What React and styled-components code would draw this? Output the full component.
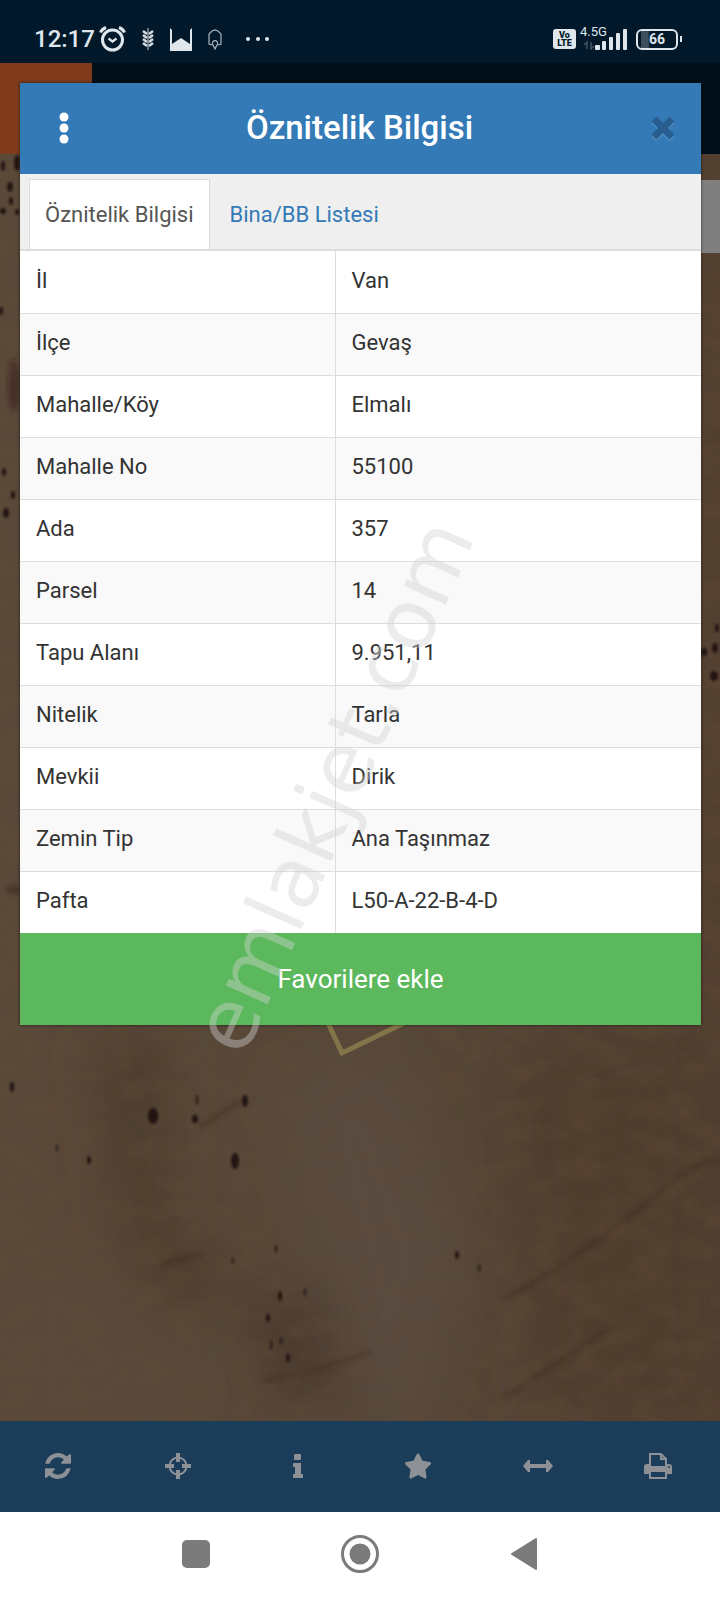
import React, { useState } from "react";
import styled, { createGlobalStyle } from "styled-components";
import { FaStar } from "react-icons/fa";

const attributes = [
  { label: "İl", value: "Van" },
  { label: "İlçe", value: "Gevaş" },
  { label: "Mahalle/Köy", value: "Elmalı" },
  { label: "Mahalle No", value: "55100" },
  { label: "Ada", value: "357" },
  { label: "Parsel", value: "14" },
  { label: "Tapu Alanı", value: "9.951,11" },
  { label: "Nitelik", value: "Tarla" },
  { label: "Mevkii", value: "Dirik" },
  { label: "Zemin Tip", value: "Ana Taşınmaz" },
  { label: "Pafta", value: "L50-A-22-B-4-D" },
];

const tabs = ["Öznitelik Bilgisi", "Bina/BB Listesi"];

// x, y, rx, ry of the shrubs on the satellite image
const shrubs = [
  [153, 1116, 5, 8], [197, 1100, 1, 5], [195, 1119, 3, 4], [245, 1101, 3, 6],
  [235, 1161, 4, 8], [12, 1087, 2, 5], [89, 1160, 2, 4], [57, 1148, 1, 3],
  [280, 1296, 2, 5], [268, 1318, 2, 4], [281, 1341, 1, 4], [271, 1345, 1, 5],
  [305, 1292, 1, 4], [288, 1358, 2, 4], [457, 1255, 2, 4], [479, 1268, 1, 4],
  [276, 1249, 1, 4], [233, 1261, 1, 3], [3, 166, 2, 5], [17, 163, 3, 8],
  [10, 187, 3, 5], [11, 201, 2, 4], [17, 212, 2, 3], [3, 211, 3, 3],
  [1, 311, 2, 4], [4, 472, 2, 4], [13, 495, 2, 4], [6, 513, 3, 5],
  [717, 628, 2, 4], [715, 648, 3, 5], [704, 652, 3, 4], [714, 676, 4, 5],
];

const Terrain = () => (
  <TerrainSvg viewBox="0 0 720 1600" preserveAspectRatio="xMidYMin slice" aria-hidden="true">
    <defs>
      <linearGradient id="soil" x1="0" y1="0" x2="1" y2="0">
        <stop offset="0" stopColor="#5a4939" />
        <stop offset="0.55" stopColor="#564738" />
        <stop offset="1" stopColor="#523f30" />
      </linearGradient>
      <filter id="grain" x="0" y="0" width="100%" height="100%">
        <feTurbulence type="fractalNoise" baseFrequency="0.03 0.05" numOctaves="5" seed="8" />
        <feColorMatrix values="0 0 0 0 0.12  0 0 0 0 0.07  0 0 0 0 0.04  1.8 0 0 0 -0.65" />
      </filter>
      <filter id="soft" x="-30%" y="-30%" width="160%" height="160%">
        <feGaussianBlur stdDeviation="26" />
      </filter>
      <filter id="edge">
        <feGaussianBlur stdDeviation="1" />
      </filter>
      <filter id="crease">
        <feGaussianBlur stdDeviation="2" />
      </filter>
    </defs>
    <rect width="720" height="1600" fill="url(#soil)" />
    <g filter="url(#soft)">
      <path d="M90 1040 L170 1030 L170 1230 L240 1260 L180 1330 L120 1240 Z" fill="#4e3c2e" />
      <path d="M280 1080 L390 1060 L460 1250 L420 1420 L360 1410 Z" fill="#5a4c40" />
      <path d="M500 1060 L720 1000 L720 1420 L540 1420 Z" fill="#503d2f" />
      <path d="M240 1290 L320 1290 L360 1400 L270 1400 Z" fill="#4c3a2d" />
      <path d="M0 1300 L110 1280 L210 1420 L0 1420 Z" fill="#5a4a3b" />
    </g>
    <g fill="#301c18" fillOpacity="0.5" filter="url(#crease)">
      <ellipse cx="14" cy="385" rx="6" ry="26" />
      <ellipse cx="14" cy="890" rx="8" ry="4" />
    </g>
    <g stroke="#35261b" strokeOpacity="0.4" strokeWidth="4" fill="none" filter="url(#crease)">
      <path d="M504 1398 Q560 1360 612 1328" />
      <path d="M504 1300 Q590 1250 650 1200 T720 1165" />
      <path d="M200 1127 L240 1101" />
      <path d="M160 1264 L200 1255" />
      <path d="M262 1380 Q310 1375 370 1352" />
    </g>
    <rect width="720" height="1600" filter="url(#grain)" opacity="0.5" />
    <g fill="#1c100a" fillOpacity="0.9" filter="url(#edge)">
      {shrubs.map(([x, y, rx, ry]) => (
        <ellipse key={`${x}-${y}`} cx={x} cy={y} rx={rx} ry={ry} />
      ))}
    </g>
    <path d="M322 1010 L342 1053 L404 1023" fill="none" stroke="#83744a" strokeWidth="5" />
  </TerrainSvg>
);

const AlarmIcon = () => (
  <svg width="27" height="26" viewBox="0 0 27 26" fill="none" stroke="#dfe6ec" strokeWidth="3">
    <circle cx="13.500" cy="14" r="10" />
    <path d="M1.500 6.500 Q3 3 7 1.500 M25.500 6.500 Q24 3 20 1.500" />
    <path d="M9.500 12.500 L13.500 15.500 L17.500 12.500" strokeWidth="2.200" />
  </svg>
);

const WheatIcon = () => (
  <svg width="12" height="24" viewBox="0 0 12 24" fill="none" stroke="#d3dae0" strokeWidth="2.500">
    <path d="M6 1 V23" strokeWidth="1" />
    <path d="M1 4 L5 7 M1 8 L5 11 M1 12 L5 15 M1 16 L5 19" />
    <path d="M11 4 L7 7 M11 8 L7 11 M11 12 L7 15 M11 16 L7 19" />
  </svg>
);

const PictureIcon = () => (
  <svg width="22" height="24" viewBox="0 0 22 24">
    <path d="M0 1 L2 3 V17 L11 11 L20 17 V3 L22 1 V24 H0 Z" fill="#dfe6ec" />
  </svg>
);

const ParcelIcon = () => (
  <svg width="14" height="21" viewBox="0 0 14 21" fill="none" stroke="#aab6bf" strokeWidth="1.200">
    <path d="M4 16 L1 15 V5 L4 2 L7 1 L10 2 L13 5 V15 L10 16" />
    <path d="M7 20 L4.500 15 A2.600 2.600 0 1 1 9.500 15 Z" />
  </svg>
);

const DotsIcon = () => (
  <svg width="32" height="6" viewBox="0 0 32 6" fill="#dfe6ec">
    <circle cx="10" cy="3" r="2" />
    <circle cx="20" cy="3" r="2" />
    <circle cx="29" cy="3" r="2" />
  </svg>
);

const SignalIcon = () => (
  <svg width="44" height="22" viewBox="0 0 44 22" fill="#dfe6ec">
    <path d="M4 21 V14 L1 17 M8 14 V21 L11 18" fill="none" stroke="#46545f" strokeWidth="1.500" />
    <rect x="12" y="17" width="5" height="5" rx="1" />
    <rect x="19" y="13" width="4" height="9" rx="1" />
    <rect x="26" y="9" width="4" height="13" rx="1" />
    <rect x="33" y="5" width="4" height="17" rx="1" />
    <rect x="40" y="1" width="4" height="21" rx="1" />
  </svg>
);

const KebabIcon = () => (
  <svg width="10" height="32" viewBox="0 0 10 32" fill="#fff">
    <circle cx="5" cy="5" r="4.500" />
    <circle cx="5" cy="16" r="4.500" />
    <circle cx="5" cy="27" r="4.500" />
  </svg>
);

const CloseIcon = () => (
  <svg width="24" height="26" viewBox="0 0 24 26" fill="none" strokeWidth="7">
    <path d="M3 6 L21 24 M21 6 L3 24" stroke="#4c8ac0" />
    <path d="M3 4 L21 22 M21 4 L3 22" stroke="#285e8f" />
  </svg>
);

// font-awesome 4 "refresh"
const RefreshIcon = () => (
  <svg width="26" height="26" viewBox="0 0 1536 1536" fill="currentColor">
    <path d="M1511 928q0 5-1 7-64 268-268 434.500T764 1536q-146 0-282.500-55T238 1324l-129 129q-19 19-45 19t-45-19-19-45V960q0-26 19-45t45-19h448q26 0 45 19t19 45-19 45l-137 137q71 66 161 102t187 36q134 0 250-65t186-179q11-17 53-117 8-23 30-23h192q13 0 22.500 9.500t9.500 22.500zm25-800v448q0 26-19 45t-45 19h-448q-26 0-45-19t-19-45 19-45l138-138Q969 256 768 256q-134 0-250 65T332 500q-11 17-53 117-8 23-30 23H50q-13 0-22.500-9.500T18 608v-7q65-268 270-434.500T768 0q146 0 284 55.500T1297 212l130-129q19-19 45-19t45 19 19 45z" />
  </svg>
);

const CrosshairIcon = () => (
  <svg width="26" height="26" viewBox="0 0 26 26" fill="none" stroke="currentColor">
    <circle cx="13" cy="13" r="8.500" strokeWidth="2" />
    <path d="M13 0 V9 M13 17 V26 M0 13 H9 M17 13 H26" strokeWidth="4" />
  </svg>
);

const InfoIcon = () => (
  <svg width="12" height="24" viewBox="0 0 12 24" fill="currentColor">
    <rect x="2" y="0" width="7" height="6" rx="1" />
    <path d="M2 9 H9 V20 H10 Q11 20 11 21 V23 Q11 24 10 24 H2 Q1 24 1 23 V21 Q1 20 2 20 H3 V13 H2 Q1 13 1 12 V10 Q1 9 2 9 Z" />
  </svg>
);

const MeasureIcon = () => (
  <svg width="30" height="12" viewBox="0 0 30 12" fill="currentColor">
    <path d="M0 6 L5 0 H7 V4 H23 V0 H25 L30 6 L25 12 H23 V8 H7 V12 H5 Z" />
  </svg>
);

const PrintIcon = () => (
  <svg width="28" height="26" viewBox="0 0 28 26" fill="none" stroke="currentColor" strokeWidth="2">
    <path d="M6 13 V1 H17 L22 6 V13 M17 1 V6 H22" />
    <path d="M0 21 V14 Q0 11 3 11 H5 V13 H23 V11 H25 Q28 11 28 14 V21 H23 V19 H5 V21 Z" fill="currentColor" stroke="none" />
    <path d="M6 18 V25 H22 V18" />
    <circle cx="25" cy="14" r="1" fill="#1b3d5a" stroke="none" />
  </svg>
);

const tools = [
  { name: "Yenile", icon: <RefreshIcon /> },
  { name: "Konum", icon: <CrosshairIcon /> },
  { name: "Bilgi", icon: <InfoIcon /> },
  { name: "Favoriler", icon: <FaStar size={28} /> },
  { name: "Ölçüm", icon: <MeasureIcon /> },
  { name: "Yazdır", icon: <PrintIcon /> },
];

const App = () => {
  const [activeTab, setActiveTab] = useState(tabs[0]);

  return (
    <Screen>
      <GlobalStyle />
      <Terrain />
      <StatusBar>
        <StatusGroup>
          <Clock>12:17</Clock>
          <AlarmIcon />
        </StatusGroup>
        <Notifications>
          <WheatIcon />
          <PictureIcon />
          <ParcelIcon />
          <DotsIcon />
        </Notifications>
        <StatusGroup>
          <Volte>
            <span>Vo</span>
            <span>LTE</span>
          </Volte>
          <Signal>
            <NetworkType>4.5G</NetworkType>
            <SignalIcon />
          </Signal>
          <Battery>
            <BatteryBody>66</BatteryBody>
            <BatteryTip />
          </Battery>
        </StatusGroup>
      </StatusBar>
      <AppHeader>
        <MenuBlock />
      </AppHeader>
      <MapArea>
        <MapControl />
        <Modal role="dialog" aria-labelledby="modal-title">
          <ModalHeader>
            <IconButton type="button" aria-label="Menü">
              <KebabIcon />
            </IconButton>
            <ModalTitle id="modal-title">Öznitelik Bilgisi</ModalTitle>
            <IconButton type="button" aria-label="Kapat">
              <CloseIcon />
            </IconButton>
          </ModalHeader>
          <TabList role="tablist">
            {tabs.map((tab) => (
              <Tab
                key={tab}
                type="button"
                role="tab"
                aria-selected={tab === activeTab}
                $active={tab === activeTab}
                onClick={() => setActiveTab(tab)}
              >
                {tab}
              </Tab>
            ))}
          </TabList>
          <AttributeTable>
            <tbody>
              {attributes.map(({ label, value }) => (
                <tr key={label}>
                  <th scope="row">{label}</th>
                  <td>{value}</td>
                </tr>
              ))}
            </tbody>
          </AttributeTable>
          <FavoriteButton type="button">Favorilere ekle</FavoriteButton>
          <Watermark aria-hidden="true">emlakjet.com</Watermark>
        </Modal>
      </MapArea>
      <Toolbar>
        {tools.map(({ name, icon }) => (
          <ToolButton key={name} type="button" aria-label={name}>
            {icon}
          </ToolButton>
        ))}
      </Toolbar>
      <SystemNav>
        <NavButton type="button" aria-label="Son uygulamalar">
          <svg width="28" height="28" viewBox="0 0 28 28">
            <rect width="28" height="28" rx="5" fill="#7b7b7b" />
          </svg>
        </NavButton>
        <NavButton type="button" aria-label="Ana ekran">
          <svg width="38" height="38" viewBox="0 0 38 38">
            <circle cx="19" cy="19" r="17.500" fill="none" stroke="#7b7b7b" strokeWidth="3" />
            <circle cx="19" cy="19" r="10.500" fill="#7b7b7b" />
          </svg>
        </NavButton>
        <NavButton type="button" aria-label="Geri">
          <svg width="26" height="32" viewBox="0 0 26 32">
            <path d="M1 16 L25 1 V31 Z" fill="#7b7b7b" stroke="#7b7b7b" strokeWidth="2" strokeLinejoin="round" />
          </svg>
        </NavButton>
      </SystemNav>
    </Screen>
  );
};

export default App;

const GlobalStyle = createGlobalStyle`
  * {
    box-sizing: border-box;
  }

  body {
    margin: 0;
    font-family: Roboto, "Noto Sans", sans-serif;
    color: #333;
  }

  button {
    padding: 0;
    border: none;
    background: none;
    font-family: inherit;
    cursor: pointer;
  }

  svg {
    display: block;
    flex-shrink: 0;
  }
`;

const Screen = styled.div`
  position: relative;
  display: flex;
  flex-direction: column;
  min-height: 100vh;
  overflow: hidden;
  background-color: #524437;
`;

const TerrainSvg = styled.svg`
  position: absolute;
  inset: 0;
  width: 100%;
  height: 100%;
`;

const StatusBar = styled.header`
  position: relative;
  display: flex;
  align-items: center;
  height: 63px;
  padding: 15px 38px 0 34px;
  background-color: #02192c;
  color: #dfe6ec;
`;

const StatusGroup = styled.div`
  display: flex;
  align-items: center;
  gap: 4px;
`;

const Clock = styled.span`
  font-size: 24px;
  font-weight: 500;
  line-height: 30px;
`;

const Notifications = styled.div`
  display: flex;
  flex: 1;
  align-items: center;
  gap: 16px;
  padding-left: 16px;
`;

const Volte = styled.div`
  display: flex;
  flex-direction: column;
  align-items: center;
  width: 23px;
  height: 20px;
  padding: 2px 0;
  border-radius: 3px;
  background-color: #dfe6ec;
  color: #02192c;
  font-size: 9px;
  font-weight: 900;
  line-height: 8px;
`;

const Signal = styled.div`
  position: relative;
  display: flex;
  align-items: center;
  padding-left: 3px;
`;

const NetworkType = styled.span`
  position: absolute;
  top: -3px;
  left: 0;
  font-size: 13px;
  line-height: 14px;
`;

const Battery = styled.div`
  display: flex;
  align-items: center;
  gap: 2px;
  padding-left: 5px;
`;

const BatteryBody = styled.div`
  width: 42px;
  height: 21px;
  border: 2px solid #dfe6ec;
  border-radius: 6px;
  background: linear-gradient(90deg, #02192c 3px, #3d4d5a 3px, #3d4d5a 10px, #02192c 12px);
  font-size: 14px;
  font-weight: 700;
  line-height: 17px;
  text-align: center;
`;

const BatteryTip = styled.span`
  width: 2px;
  height: 6px;
  background-color: #dfe6ec;
`;

const AppHeader = styled.div`
  position: relative;
  height: 91px;
  background-color: #000f1a;
`;

const MenuBlock = styled.div`
  width: 92px;
  height: 100%;
  background-color: #7f3b1c;
`;

const MapArea = styled.main`
  position: relative;
  flex: 1;
  padding: 0 19px 0 20px;
`;

const MapControl = styled.div`
  position: absolute;
  top: 26px;
  right: 0;
  width: 40px;
  height: 73px;
  background-color: #7f7f7f;
`;

const Modal = styled.section`
  position: relative;
  margin-top: -71px;
  background-color: #fff;
  box-shadow: 0 0 3px rgba(0, 0, 0, 0.6);
`;

const ModalHeader = styled.div`
  display: flex;
  align-items: center;
  justify-content: space-between;
  height: 91px;
  padding: 0 8px 2px 14px;
  background-color: #347ab7;
`;

const ModalTitle = styled.h1`
  margin: 0 8px 0 0;
  color: #fff;
  font-size: 33px;
  font-weight: 500;
  line-height: 40px;
`;

const IconButton = styled.button`
  display: flex;
  align-items: center;
  justify-content: center;
  width: 60px;
  height: 60px;
`;

const TabList = styled.div`
  display: flex;
  align-items: flex-end;
  gap: 4px;
  height: 77px;
  padding: 0 9px;
  border-bottom: 2px solid #ddd;
  background-color: #efefef;
`;

const Tab = styled.button`
  height: 70px;
  padding: 0 15px;
  border: 1px solid ${({ $active }) => ($active ? "#ddd" : "transparent")};
  border-bottom: none;
  background-color: ${({ $active }) => ($active ? "#fff" : "transparent")};
  color: ${({ $active }) => ($active ? "#555" : "#347ab7")};
  font-size: 22px;
  line-height: 30px;
`;

const AttributeTable = styled.table`
  width: 100%;
  border-collapse: collapse;
  table-layout: fixed;
  font-size: 22px;
  line-height: 30px;

  tr {
    height: 62px;
    border-bottom: 1px solid #ddd;
  }

  tr:last-child {
    border-bottom: none;
  }

  tr:nth-child(even) {
    background-color: #f9f9f9;
  }

  th,
  td {
    padding: 0 15px 2px;
    font-weight: 400;
    text-align: left;
  }

  th {
    width: 46.4%;
    padding-left: 16px;
    border-right: 1px solid #ddd;
  }
`;

const FavoriteButton = styled.button`
  display: block;
  width: 100%;
  height: 92px;
  background-color: #5cb85c;
  color: #fff;
  font-size: 26px;
  line-height: 32px;
`;

const Watermark = styled.span`
  position: absolute;
  top: 884px;
  left: 243px;
  transform: rotate(-66deg);
  transform-origin: left bottom;
  color: rgba(210, 210, 210, 0.42);
  font-family: "DejaVu Sans", sans-serif;
  font-size: 84px;
  line-height: 100px;
  pointer-events: none;
`;

const Toolbar = styled.nav`
  position: relative;
  display: grid;
  grid-template-columns: repeat(6, 1fr);
  height: 91px;
  background-color: #1b3d5a;
`;

const ToolButton = styled.button`
  display: flex;
  align-items: center;
  justify-content: center;
  padding: 0 4px 2px 0;
  color: #8d9195;
`;

const SystemNav = styled.nav`
  position: relative;
  display: flex;
  align-items: center;
  justify-content: center;
  gap: 104px;
  height: 88px;
  padding-bottom: 4px;
  background-color: #fff;
`;

const NavButton = styled.button`
  display: flex;
  align-items: center;
  justify-content: center;
  width: 60px;
  height: 60px;
`;
